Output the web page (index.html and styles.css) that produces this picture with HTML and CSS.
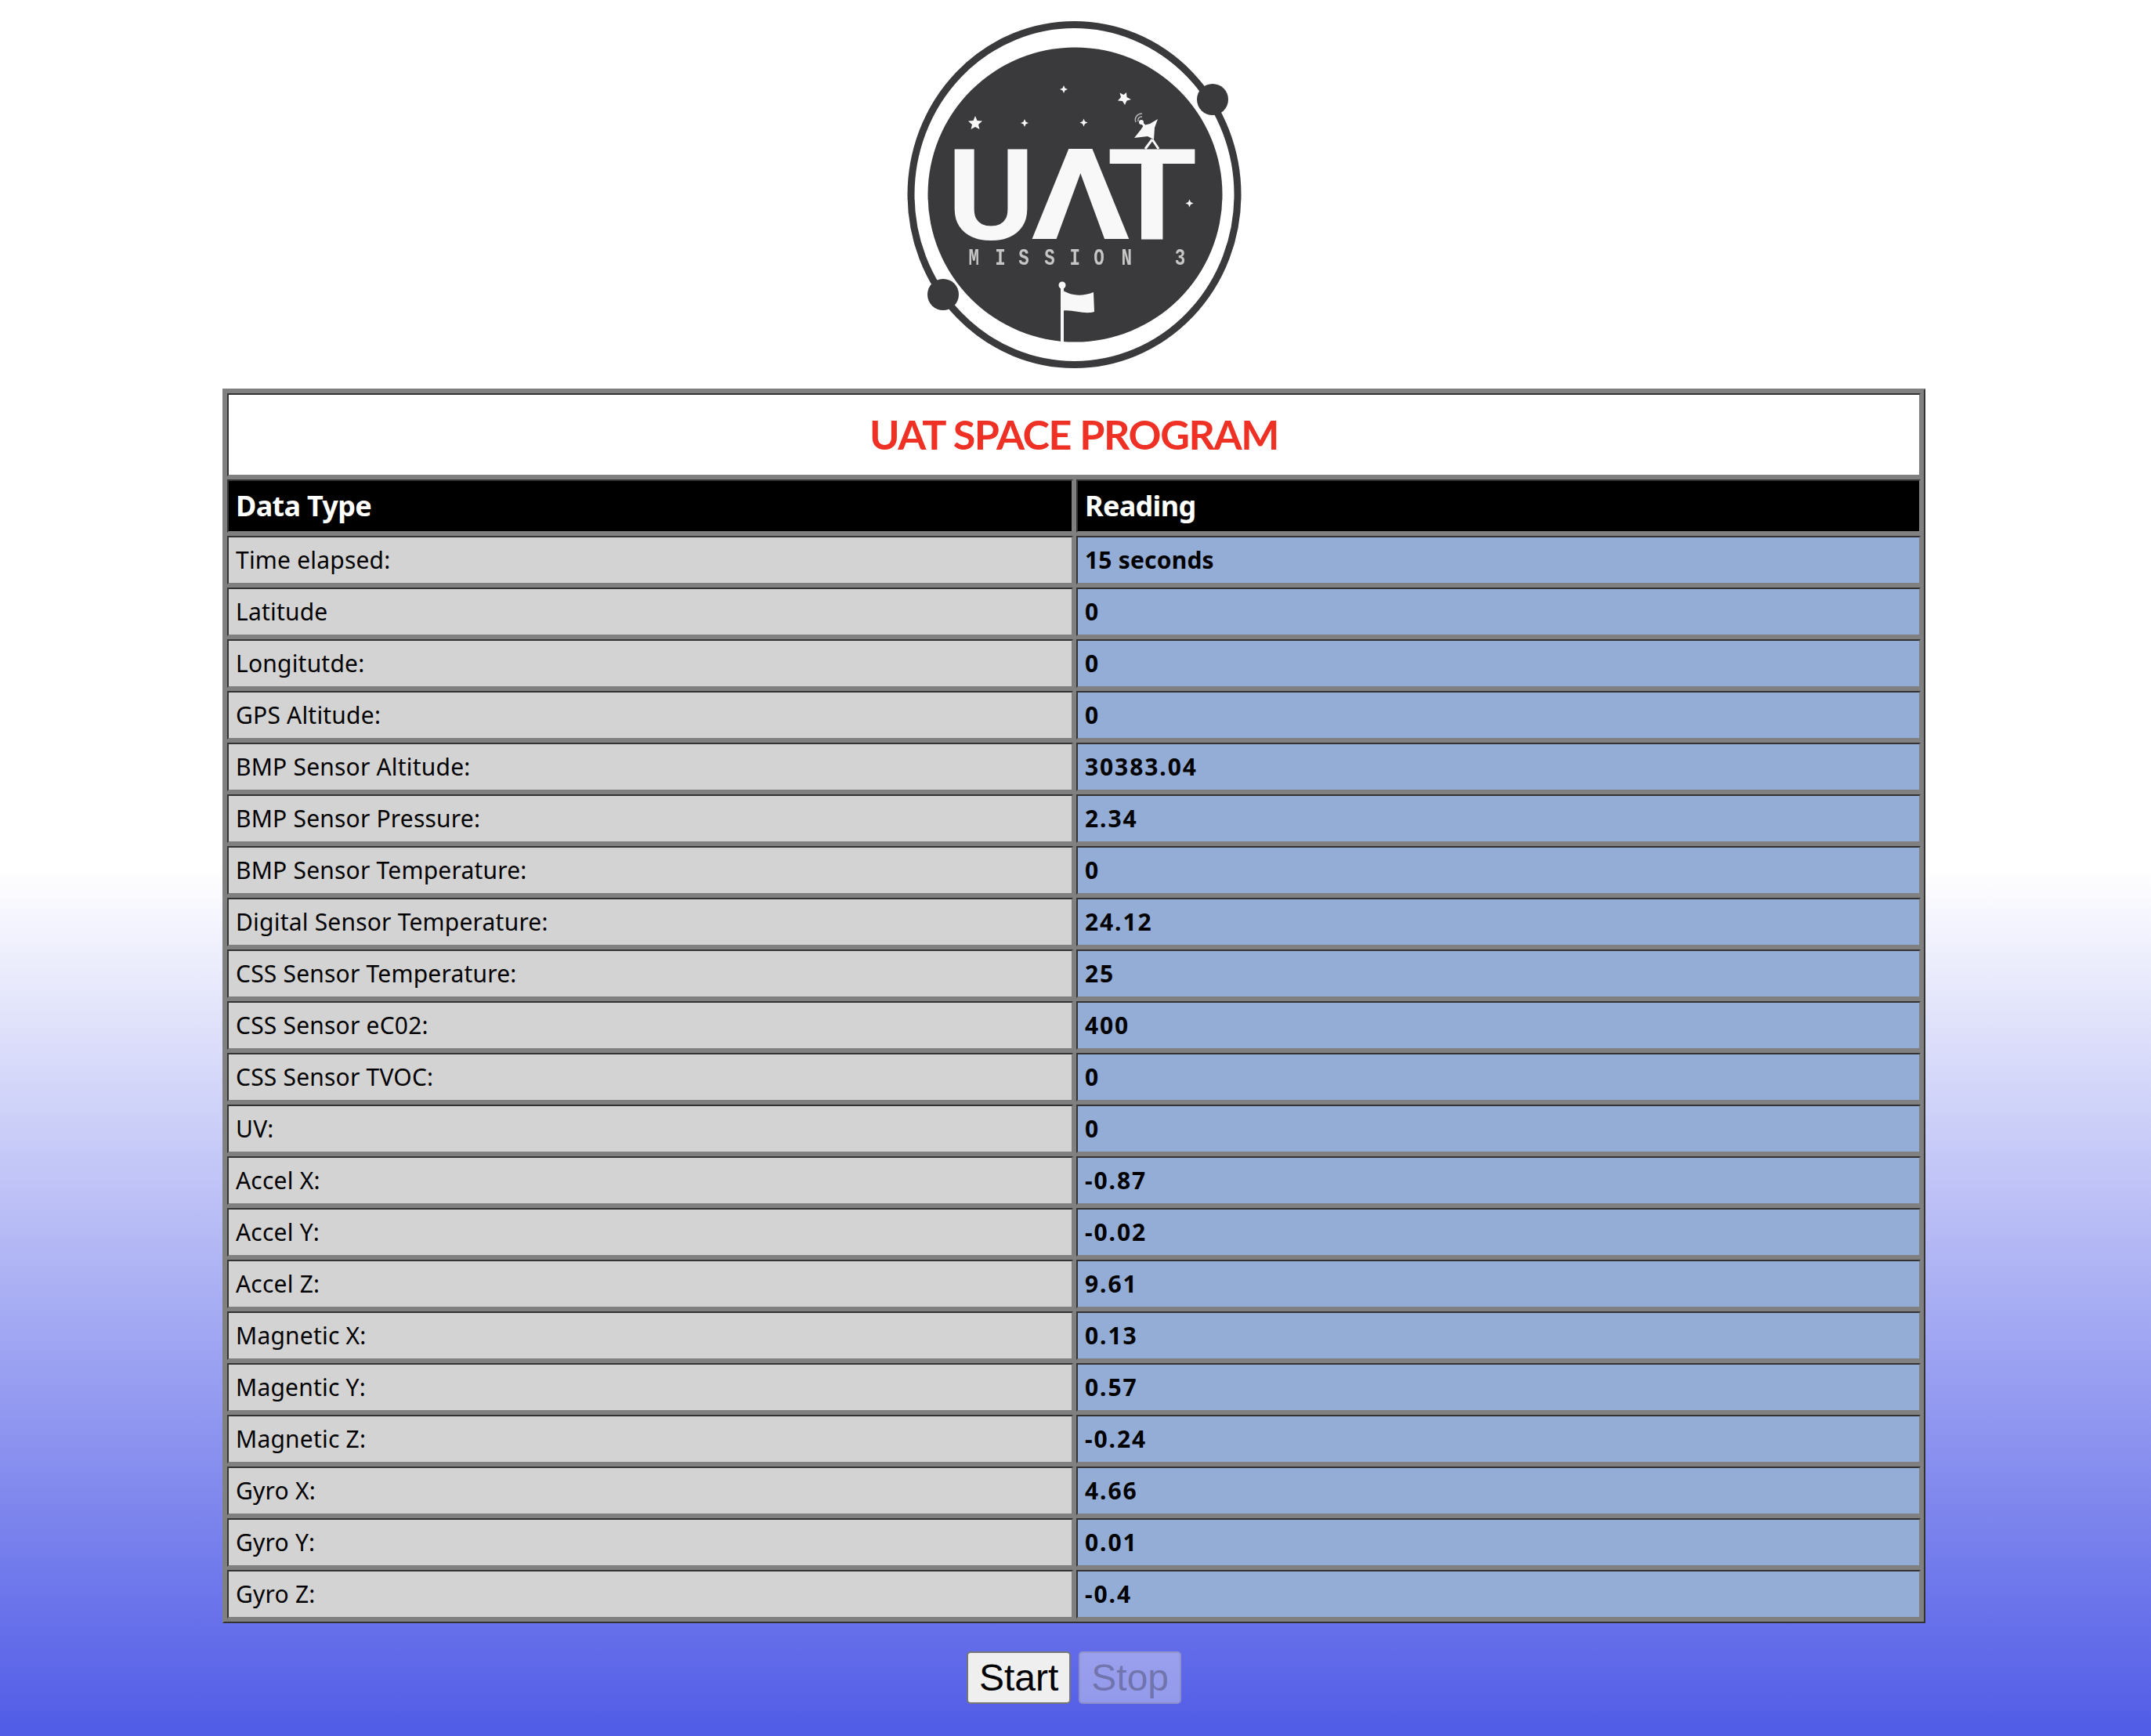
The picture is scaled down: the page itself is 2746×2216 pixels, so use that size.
FILE: index.html
```html
<!DOCTYPE html>
<html lang="en">
<head>
    <meta charset="UTF-8">
    <title>UAT Space Program</title>
    <link rel="stylesheet" href="styles.css">
</head>

<body>
    <svg class="logo" viewBox="0 0 482 486" role="img" aria-label="UAT Mission 3">
        <ellipse class="logo-ring" cx="241.5" cy="238.5" rx="208.500" ry="217"/>
        <circle class="logo-dark" cx="242.5" cy="238.5" r="188"/>
        <circle class="logo-dark" cx="418" cy="117" r="20"/>
        <circle class="logo-dark" cx="74" cy="366" r="20"/>

        <!-- stars -->
        <polygon class="logo-light" points="115,138 117.500,144 124,144.500 119,149 120.500,155 115,152 109.500,155 111,149 106,144.500 112.500,144"/>
        <polygon class="logo-light" points="308,108 308.500,114 314,117 308.500,118.500 306,124 303,119 297,118.500 301,114 299.500,108.500 304.500,111"/>
        <polygon class="logo-light" points="228,99 229.500,102.500 233,104 229.500,105.500 228,109 226.500,105.500 223,104 226.500,102.500"/>
        <polygon class="logo-light" points="178,142 179.500,145.500 183,147 179.500,148.500 178,152 176.500,148.500 173,147 176.500,145.500"/>
        <polygon class="logo-light" points="253.500,141.500 255,145 258.500,146.500 255,148 253.500,151.500 252,148 248.500,146.500 252,145"/>
        <polygon class="logo-light" points="388.500,244.500 390,248 393.500,249.500 390,251 388.500,254.500 387,251 383.500,249.500 387,248"/>

        <!-- dish -->
        <polygon class="logo-light" points="348,142 344,153 343,168 335,164 318,166 326,156 330,150 338,148"/>
        <circle class="logo-light" cx="327" cy="146" r="3"/>
        <path class="logo-wire" d="M327 146 L334 154 M341 168 L332 180 M341 168 L349 180"/>
        <path class="logo-wire thin" d="M320 146 A 8 8 0 0 1 328 135 M323 145 A 4.500 4.500 0 0 1 328 139"/>

        <!-- letters -->
        <text class="logo-big" x="79" y="295" textLength="112" lengthAdjust="spacingAndGlyphs">U</text>
        <text class="logo-big" x="186" y="295" textLength="127" lengthAdjust="spacingAndGlyphs">Λ</text>
        <text class="logo-big" x="283" y="295" textLength="116" lengthAdjust="spacingAndGlyphs">T</text>
        <text class="logo-small" transform="scale(.75 1)" x="151 196 236 280 323 364 411 493" y="328">MISSION 3</text>

        <!-- flag -->
        <rect class="logo-light" x="224" y="356" width="4" height="71"/>
        <circle class="logo-light" cx="226" cy="354" r="4.500"/>
        <path class="logo-light" d="M224 359 C234 366 248 370 266 363 L267 388 C254 392 238 384 224 387 Z"/>
    </svg>

    <table class="readings">
        <colgroup>
            <col class="col-label">
            <col class="col-value">
        </colgroup>
        <tr>
            <th class="title" colspan="2">UAT SPACE PROGRAM</th>
        </tr>
        <tr>
            <th class="head">Data Type</th>
            <th class="head">Reading</th>
        </tr>
        <tr><td class="label">Time elapsed:</td><td class="value words">15 seconds</td></tr>
        <tr><td class="label">Latitude</td><td class="value">0</td></tr>
        <tr><td class="label">Longitutde:</td><td class="value">0</td></tr>
        <tr><td class="label">GPS Altitude:</td><td class="value">0</td></tr>
        <tr><td class="label">BMP Sensor Altitude:</td><td class="value">30383.04</td></tr>
        <tr><td class="label">BMP Sensor Pressure:</td><td class="value">2.34</td></tr>
        <tr><td class="label">BMP Sensor Temperature:</td><td class="value">0</td></tr>
        <tr><td class="label">Digital Sensor Temperature:</td><td class="value">24.12</td></tr>
        <tr><td class="label">CSS Sensor Temperature:</td><td class="value">25</td></tr>
        <tr><td class="label">CSS Sensor eC02:</td><td class="value">400</td></tr>
        <tr><td class="label">CSS Sensor TVOC:</td><td class="value">0</td></tr>
        <tr><td class="label">UV:</td><td class="value">0</td></tr>
        <tr><td class="label">Accel X:</td><td class="value">-0.87</td></tr>
        <tr><td class="label">Accel Y:</td><td class="value">-0.02</td></tr>
        <tr><td class="label">Accel Z:</td><td class="value">9.61</td></tr>
        <tr><td class="label">Magnetic X:</td><td class="value">0.13</td></tr>
        <tr><td class="label">Magentic Y:</td><td class="value">0.57</td></tr>
        <tr><td class="label">Magnetic Z:</td><td class="value">-0.24</td></tr>
        <tr><td class="label">Gyro X:</td><td class="value">4.66</td></tr>
        <tr><td class="label">Gyro Y:</td><td class="value">0.01</td></tr>
        <tr><td class="label">Gyro Z:</td><td class="value">-0.4</td></tr>
    </table>

    <div class="controls">
        <button class="btn">Start</button>
        <button class="btn" disabled>Stop</button>
    </div>
</body>
</html>
```

FILE: styles.css
```css
html {
    height: 100%;
}
body {
    margin: 0;
    width: 2742px;
    height: 2216px;
    padding-top: 10px;
    box-sizing: border-box;
    overflow: hidden;
    font-family: "Noto Sans", sans-serif;
    background: linear-gradient(to bottom, white 50%, #505be7 100%) no-repeat;
    background-size: 2746px 2216px;
}

/* logo */
.logo {
    display: block;
    width: 482px;
    height: 486px;
    margin: 0 auto;
    filter: blur(0.7px);
}
.logo-ring {
    fill: none;
    stroke: #3a3a3c;
    stroke-width: 9;
}
.logo-dark {
    fill: #3a3a3c;
}
.logo-light {
    fill: #f8f8f8;
}
.logo-wire {
    fill: none;
    stroke: #f8f8f8;
    stroke-width: 3;
}
.logo-wire.thin {
    stroke: #b5b5b5;
    stroke-width: 1.5;
}
.logo-big {
    fill: #f8f8f8;
    font-family: Roboto, sans-serif;
    font-weight: 700;
    font-size: 162px;
}
.logo-small {
    fill: #c6c6c6;
    font-family: "Liberation Mono", monospace;
    font-size: 30px;
    font-weight: bold;
    text-anchor: middle;
}

/* table */
.readings {
    width: 2174px;
    margin: 0 auto;
    table-layout: fixed;
    border-collapse: separate;
    border-spacing: 4px;
    background: #808080;
    border: 2px solid;
    border-color: #808080 #333 #333 #808080;
}
.col-label {
    width: 1080px;
}
.readings th,
.readings td {
    box-sizing: border-box;
    padding: 0 9px 2px;
    border: 2px solid;
    border-color: #333 #808080 #808080 #333;
    text-align: left;
}
.readings .title {
    height: 106px;
    background: white;
    color: #ee3124;
    font-family: Lato, sans-serif;
    font-size: 52px;
    letter-spacing: -1.4px;
    text-align: center;
}
.readings .head {
    height: 68px;
    padding-bottom: 1px;
    background: black;
    color: white;
    font-size: 36px;
    letter-spacing: -0.7px;
}
.label,
.value {
    height: 62px;
    font-size: 30px;
    color: black;
}
.label {
    background: #d3d3d3;
    letter-spacing: 0.2px;
}
.value {
    background: #93add6;
    font-weight: bold;
    letter-spacing: 1.9px;
}
.value.words {
    letter-spacing: 0.2px;
}

/* buttons */
.controls {
    display: flex;
    justify-content: center;
    gap: 10px;
    margin-top: 36px;
}
.btn {
    box-sizing: border-box;
    height: 67px;
    padding: 0 14px;
    border: 2px solid #767676;
    border-radius: 5px;
    background: #efefef;
    color: black;
    font-family: "Liberation Sans", Arial, sans-serif;
    font-size: 48px;
}
.btn:disabled {
    border-color: rgba(118, 118, 118, 0.3);
    background: rgba(239, 239, 239, 0.4);
    color: rgba(16, 16, 16, 0.3);
}
```
